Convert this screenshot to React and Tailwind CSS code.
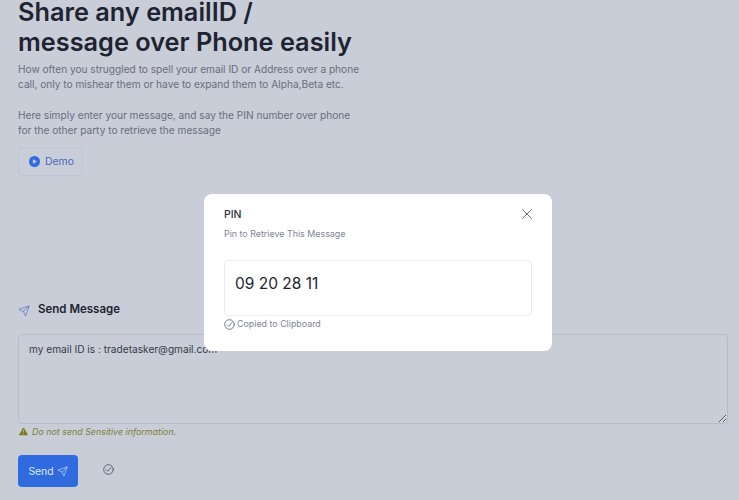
import { X, Play, Send, TriangleAlert } from 'lucide-react';

function CheckIcon({ className }) {
  return (
    <svg viewBox="0 0 24 24" fill="none" stroke="currentColor" strokeWidth="1.7" strokeLinecap="round" strokeLinejoin="round" className={className}>
      <circle cx="12" cy="12" r="10.5" />
      <path d="m7 12.5 3.5 3.5 7-8" />
    </svg>
  );
}

export default function App() {
  return (
    <div className="relative h-[500px] overflow-hidden bg-[#c9cdd8] px-[18px] font-['Inter',sans-serif] text-[#1e2431]">
      <h1 className="-mt-[3px] text-[25.3px] font-semibold leading-[30px] tracking-normal">
        Share any emailID /<br />
        message over Phone easily
      </h1>
      <div className="mt-[5px] w-[345px] text-[10.15px] leading-[15.3px] text-[#676e7d]">
        <p>How often you struggled to spell your email ID or Address over a phone call, only to mishear them or have to expand them to Alpha,Beta etc.</p>
        <p className="mt-[15.3px]">Here simply enter your message, and say the PIN number over phone for the other party to retrieve the message</p>
      </div>
      <button className="mt-[9px] flex h-[29px] w-[65px] items-center gap-[5px] rounded border border-[#c0c5d6] pl-[10px] text-[10.4px] text-[#4a68c4]">
        <span className="flex h-[11px] w-[11px] items-center justify-center rounded-full bg-[#2f6bdf]">
          <Play size={5} fill="#c9cdd8" stroke="#c9cdd8" />
        </span>
        Demo
      </button>

      <div className="mt-[124px] flex items-center gap-[8px]">
        <Send size={12} strokeWidth={1.3} className="mt-[3px] text-[#4a68c4]" />
        <h2 className="text-[11.5px] font-semibold leading-[18px]">Send Message</h2>
      </div>
      <textarea
        readOnly
        defaultValue="my email ID is : tradetasker@gmail.com"
        className="mt-[16px] block h-[90px] w-[710px] rounded border border-[#b7bccb] bg-transparent px-[10px] pb-[4px] pt-[5px] text-[10.15px] leading-[18px] text-[#343a48] outline-none"
      />
      <div className="flex h-[14px] items-center gap-[3px] text-[8.9px] italic text-[#7d7f35]">
        <TriangleAlert size={11} fill="#7b7c1e" stroke="#c9cdd8" strokeWidth={1.5} />
        <span>Do not send Sensitive information.</span>
      </div>
      <div className="mt-[17px] flex items-center gap-[25px]">
        <button className="flex h-[32px] w-[60px] items-center justify-center gap-[3px] rounded bg-[#2f6bdf] text-[10.4px] text-[#dfe6f5]">
          Send
          <Send size={11} strokeWidth={1.3} />
        </button>
        <CheckIcon className="mb-[3px] h-[11px] w-[11px] text-[#3f4a62]" />
      </div>

      {/* pin dialog */}
      <div className="absolute left-[204px] top-[194px] h-[157px] w-[348px] rounded-lg bg-white px-5 pt-[14px]">
        <X size={18} strokeWidth={1.2} className="absolute right-[16px] top-[11px] text-[#555b66]" />
        <h3 className="text-[10.5px] font-medium leading-[14px] text-[#2b303b]">PIN</h3>
        <p className="mt-[5px] text-[8.9px] leading-[14px] text-[#7d8594]">Pin to Retrieve This Message</p>
        <div className="mt-[19px] h-[56px] rounded border border-[#e9ebf2] px-[10px] pt-[12px] text-[15.5px] leading-[22px] text-[#1e2431]">
          09 20 28 11
        </div>
        <div className="mt-[2px] flex items-center gap-[2px] text-[8.9px] leading-[12px] text-[#7d8594]">
          <CheckIcon className="h-[11px] w-[11px] text-[#4f5868]" />
          Copied to Clipboard
        </div>
      </div>
    </div>
  );
}
